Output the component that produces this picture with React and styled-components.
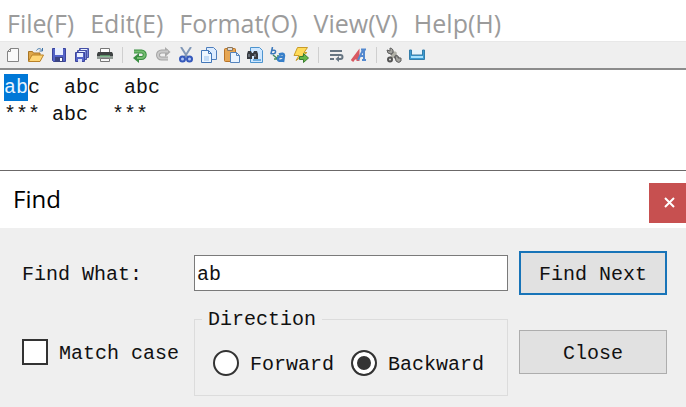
import React, { useEffect, useRef } from "react";
import styled, { createGlobalStyle } from "styled-components";

const mono = '"Liberation Mono", monospace';
const sans = '"Open Sans", "Noto Sans", sans-serif';

const GlobalStyle = createGlobalStyle`
  * { box-sizing: border-box; }
  body { margin: 0; background: #fff; }
`;

const Page = styled.div`
  display: flex;
  flex-direction: column;
  min-height: 100vh;
  color: #111;
  font-family: ${mono};
  font-size: 20px;
  line-height: 24px;
`;

const MenuBar = styled.nav`
  display: flex;
  gap: 16px;
  padding: 7px 7px 2px;
  background: #fff;
`;

const MenuItem = styled.button`
  padding: 0;
  border: 0;
  background: none;
  color: #9b9b9b;
  font-family: ${sans};
  font-size: 25px;
  line-height: 32px;
  white-space: nowrap;
`;

const ToolBar = styled.div`
  display: flex;
  align-items: center;
  gap: 7px;
  height: 29px;
  padding: 0 5px;
  background: #efefef;
  border-top: 1px solid #e8e8e8;
  border-bottom: 2px solid #8c8c8c;
`;

const ToolButton = styled.button`
  display: flex;
  padding: 0;
  border: 0;
  background: none;
`;

const ToolSeparator = styled.span`
  width: 5px;
  height: 16px;
  background: linear-gradient(#cfcfcf, #cfcfcf) center / 1px 100% no-repeat;
`;

const Editor = styled.textarea`
  display: block;
  width: 100%;
  height: 100px;
  padding: 4px;
  border: 0;
  outline: 0;
  resize: none;
  overflow: hidden;
  background: #fff;
  color: #111;
  caret-color: transparent;
  font-family: ${mono};
  font-size: 20px;
  line-height: 27px;
  &::selection { background: #0078d7; color: #e8f4ff; }
`;

const Dialog = styled.section`
  display: flex;
  flex: 1;
  flex-direction: column;
  border-top: 1px solid #6b6868;
`;

const TitleBar = styled.header`
  display: flex;
  align-items: center;
  justify-content: space-between;
  height: 57px;
  background: #fff;
`;

const Title = styled.h1`
  margin: 0;
  padding: 0 0 2px 13px;
  color: #000;
  font-family: ${sans};
  font-size: 24px;
  font-weight: 400;
  line-height: 32px;
`;

const CloseBox = styled.button`
  display: flex;
  align-items: center;
  justify-content: center;
  width: 37px;
  height: 40px;
  margin-top: 6px;
  padding: 0 0 0 4px;
  border: 0;
  background: #c75050;
`;

const Form = styled.form`
  display: grid;
  flex: 1;
  grid-template-columns: 161px minmax(0, 1fr) 148px;
  align-content: start;
  align-items: center;
  gap: 12px 11px;
  padding: 23px 19px 12px 22px;
  background: #efefef;
`;

const FieldLabel = styled.label`
  padding-top: 4px;
  white-space: nowrap;
`;

const TextField = styled.input`
  width: 100%;
  height: 36px;
  padding: 4px 2px 2px;
  border: 1px solid #7a7a7a;
  border-radius: 0;
  outline: 0;
  background: #fff;
  color: #111;
  font-family: ${mono};
  font-size: 20px;
`;

const PushButton = styled.button`
  height: 44px;
  padding: 4px 0 0;
  border: ${(p) => (p.$primary ? "2px solid #1874b8" : "1px solid #adadad")};
  background: #e1e1e1;
  color: #111;
  font-family: ${mono};
  font-size: 20px;
  line-height: 24px;
`;

const Choice = styled.label`
  display: flex;
  align-items: center;
  gap: 11px;
  white-space: nowrap;
`;

const Caption = styled.span`
  padding-top: 4px;
`;

const CheckBox = styled.input`
  appearance: none;
  flex: none;
  width: 26px;
  height: 26px;
  margin: 0;
  border: 2px solid #333;
  background: #fff;
  &:checked { box-shadow: inset 0 0 0 4px #fff; background: #333; }
`;

const Radio = styled(CheckBox)`
  border-radius: 50%;
`;

const Group = styled.fieldset`
  min-width: 0;
  margin: 0;
  padding: 18px;
  border: 1px solid #dcdcdc;
`;

const Legend = styled.legend`
  margin-left: -11px;
  padding: 2px 6px 0;
  line-height: 22px;
`;

const Options = styled.div`
  display: flex;
  gap: 17px;
`;

const icons = {
  New: (
    <path d="M5.5 1.5h8v13h-11V4.5z M5.5 1.5v3h-3" fill="#fafafa" stroke="#858585" />
  ),
  Open: (
    <>
      <path d="M.5 14V4.5h4l1 1.5h6.5v3" fill="#e0a84a" stroke="#a87524" />
      <path d="M.5 14.5 4 8h11.5l-3.5 6.5z" fill="#ffd675" stroke="#b98127" />
      <path d="M8.5 3.5c1.5-2.5 4-2.5 5.5 0M14.5 1v3h-3" fill="none" stroke="#3f74a8" />
    </>
  ),
  Save: (
    <>
      <path d="M1.5 1.5h13v13h-12l-1-1z" fill="#5463c7" stroke="#3b449b" />
      <path d="M4 1h8v7H4z" fill="#e9efff" />
      <path d="M4 10h8v5H4z" fill="#3b4482" />
      <path d="M9 11h2v3H9z" fill="#fff" />
    </>
  ),
  "Save All": (
    <>
      <path d="M5.5 1.5h9v9h-9z" fill="#7784d5" stroke="#4650a5" />
      <path d="M7 2h6v1H7z" fill="#e9efff" />
      <path d="M3.5 3.5h9v9h-9z" fill="#7784d5" stroke="#4650a5" />
      <path d="M5 4h6v1H5z" fill="#e9efff" />
      <path d="M1.5 5.5h9v9h-9z" fill="#5463c7" stroke="#3b449b" />
      <path d="M3 6h6v4H3z" fill="#e9efff" />
      <path d="M4 12h4v3H4z" fill="#dce2fa" />
    </>
  ),
  Print: (
    <>
      <path d="M3.5 1.5h9v5h-9z" fill="#fff" stroke="#777" />
      <path d="M1 5h14l1 2v5H0V7z" fill="#3e4242" />
      <path d="M0 9h16v3H0z" fill="#929b96" />
      <path d="M3 9h10" stroke="#78d88c" />
      <path d="M3.5 11.5h9v3h-9z" fill="#f7f7f7" stroke="#777" />
    </>
  ),
  Undo: (
    <>
      <path d="M2 4.5h7.5a3 3 0 0 1 0 6.500H5" fill="none" stroke="#388d40" strokeWidth="4" />
      <path d="M7 6v10L1 11z" fill="#388d40" />
      <path d="M2 4.5h7.500a3 3 0 0 1 0 6.500H5" fill="none" stroke="#75bd71" strokeWidth="2" />
    </>
  ),
  Redo: (
    <>
      <path d="M13 4.5H6.5a3 3 0 0 0 0 7H13" fill="none" stroke="#a4a4a4" strokeWidth="4" />
      <path d="M10 0v10l5.500-5z" fill="#aaa" />
      <path d="M13 4.5H6.5a3 3 0 0 0 0 7H13" fill="none" stroke="#cacaca" strokeWidth="2" />
    </>
  ),
  Cut: (
    <>
      <path d="m3 0 7 11M13 0 6 11" stroke="#8298b7" strokeWidth="2" />
      <circle cx="4.5" cy="12" r="2.5" fill="#afc4f5" stroke="#3559bb" strokeWidth="2" />
      <circle cx="11.5" cy="12" r="2.5" fill="#afc4f5" stroke="#3559bb" strokeWidth="2" />
    </>
  ),
  Copy: (
    <>
      <path d="M5.5.5h7l3 3v9h-10z" fill="#dcecff" stroke="#4e7ebc" />
      <path d="M.5 3.5h7l3 3v9H.5z" fill="#edf6ff" stroke="#4377b8" />
      <path d="M7.5 3.5v3h3" fill="none" stroke="#4377b8" />
      <path d="M3 9h5v5H3z" fill="#c3dcf7" />
    </>
  ),
  Paste: (
    <>
      <rect x=".5" y="1.5" width="11" height="13" rx="1" fill="#e6a653" stroke="#b87327" />
      <path d="M3.5.5h5v3h-5z" fill="#ddd" stroke="#8d7960" />
      <path d="M6.5 5.5h6l3 3v7h-9z" fill="#eaf4ff" stroke="#5584bd" />
      <path d="M12.5 5.5v3h3" fill="none" stroke="#5584bd" />
    </>
  ),
  Find: (
    <>
      <path d="M3.5.5h9l3 3v12h-12z" fill="#cfe7ff" stroke="#4d94cf" />
      <path d="M6 13h8" stroke="#6faee0" strokeWidth="2" />
      <path d="M1 4h3l1 2h1l1-2h3l1 3v5H7V9H5v3H0V7z" fill="#36393f" />
      <path d="M2 7v3M8 7v3" stroke="#96a1ac" />
    </>
  ),
  Replace: (
    <>
      <path d="m2.5 0-1.500 6.500q4 1 4.500-1.500t-3.500-1.500" fill="none" stroke="#3977bb" strokeWidth="1.5" />
      <path d="m3 8 5 4m0-4v4H4" fill="none" stroke="#438c62" strokeWidth="1.5" />
      <path d="M9 7.500q5-2 5 1l-1 6.500M13 10q-5-1-5 2t5 1" fill="none" stroke="#377fc9" strokeWidth="2.5" />
    </>
  ),
  "Go To": (
    <>
      <path d="M4.5.5h10L11 5.5h3L3 13.5l3-5H1z" fill="#ffdc59" stroke="#c89b29" />
      <path d="M6.5 9.5h4v-3l5 4.5-5 4.5v-3h-4z" fill="#65b746" stroke="#397e2f" />
    </>
  ),
  "Word Wrap": (
    <>
      <path d="M2 4h12M2 8h10.500a2 2 0 0 1 0 4H10M2 12h4" fill="none" stroke="#667582" strokeWidth="2" />
      <path d="m11 9-3.500 3 3.500 3z" fill="#667582" />
    </>
  ),
  Font: (
    <>
      <path d="m1 14 6-8v8M3 11h4" fill="none" stroke="#d95962" strokeWidth="3" />
      <path d="m7 13 5-10h1v10M9 9h4M10 2.500h5M11 13h4" fill="none" stroke="#5489cf" strokeWidth="2" />
    </>
  ),
  Settings: (
    <>
      <path d="m5 5 8 8" stroke="#686868" strokeWidth="4" />
      <path d="M4 1v3L1 3q0 4 4 4 3-1 2-4-1-2-3-2zM15 11h-3v-2H9l1 5q3 3 5 0z" fill="#a4a4a0" stroke="#606060" />
      <path d="m10 5-5 6" stroke="#b1b1a8" strokeWidth="3" />
      <circle cx="4" cy="12.500" r="2" fill="#ddd" stroke="#555" strokeWidth="2" />
    </>
  ),
  "Status Bar": (
    <>
      <path d="M.5 3v9.500h15V3h-2v5h-11V3z" fill="#3b9bd2" stroke="#347eaa" />
      <path d="M2 10h12" stroke="#a7e2ff" strokeWidth="2" />
      <path d="M3 3h10v4H3z" fill="#e5f3fb" />
    </>
  ),
};

const toolGroups = [
  ["New", "Open", "Save", "Save All", "Print"],
  ["Undo", "Redo", "Cut", "Copy", "Paste", "Find", "Replace", "Go To"],
  ["Word Wrap", "Font"],
  ["Settings", "Status Bar"],
];

const menus = ["File(F)", "Edit(E)", "Format(O)", "View(V)", "Help(H)"];

export default function App() {
  const editor = useRef(null);

  useEffect(() => {
    editor.current.focus();
    editor.current.setSelectionRange(0, 2);
  }, []);

  return (
    <Page>
      <GlobalStyle />
      <MenuBar>
        {menus.map((name) => (
          <MenuItem key={name} type="button">{name}</MenuItem>
        ))}
      </MenuBar>
      <ToolBar role="toolbar" aria-label="Tools">
        {toolGroups.map((group, i) => (
          <React.Fragment key={group[0]}>
            {i > 0 && <ToolSeparator />}
            {group.map((name) => (
              <ToolButton key={name} type="button" aria-label={name}>
                <svg width="16" height="16" viewBox="0 0 16 16" aria-hidden="true">{icons[name]}</svg>
              </ToolButton>
            ))}
          </React.Fragment>
        ))}
      </ToolBar>
      <Editor
        ref={editor}
        aria-label="Document"
        spellCheck={false}
        defaultValue={"abc  abc  abc\n*** abc  ***"}
      />
      <Dialog role="dialog" aria-labelledby="find-title">
        <TitleBar>
          <Title id="find-title">Find</Title>
          <CloseBox type="button" aria-label="Close dialog">
            <svg width="11" height="11" viewBox="0 0 11 11" aria-hidden="true">
              <path d="m1 1 9 9M10 1l-9 9" stroke="#fff" strokeWidth="2" />
            </svg>
          </CloseBox>
        </TitleBar>
        <Form onSubmit={(e) => e.preventDefault()}>
          <FieldLabel htmlFor="find-what">Find What:</FieldLabel>
          <TextField id="find-what" type="text" defaultValue="ab" />
          <PushButton $primary type="submit">Find Next</PushButton>
          <Choice>
            <CheckBox type="checkbox" />
            <Caption>Match case</Caption>
          </Choice>
          <Group>
            <Legend>Direction</Legend>
            <Options>
              <Choice>
                <Radio type="radio" name="direction" value="forward" />
                <Caption>Forward</Caption>
              </Choice>
              <Choice>
                <Radio type="radio" name="direction" value="backward" defaultChecked />
                <Caption>Backward</Caption>
              </Choice>
            </Options>
          </Group>
          <PushButton type="button">Close</PushButton>
        </Form>
      </Dialog>
    </Page>
  );
}
